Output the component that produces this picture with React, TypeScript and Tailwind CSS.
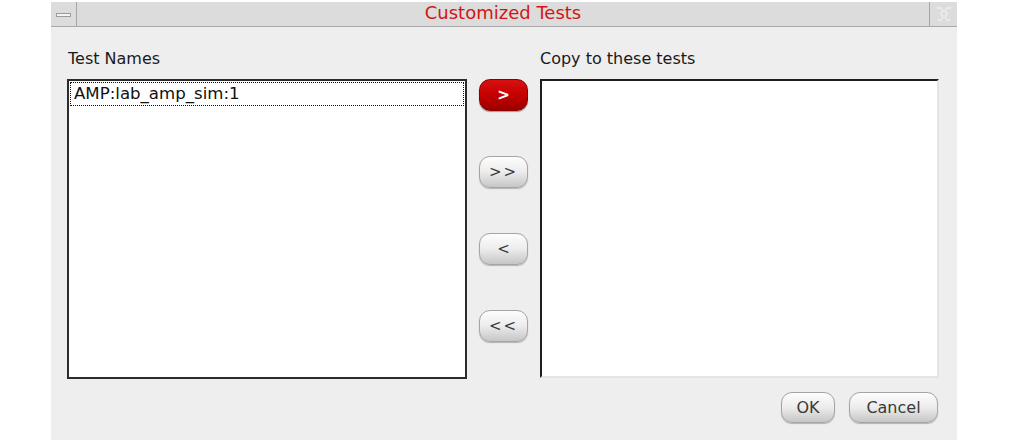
import React from 'react'

const font = { fontFamily: '"DejaVu Sans", "Liberation Sans", sans-serif' }

function PillButton({
  label,
  red = false,
  className = '',
}: {
  label: string
  red?: boolean
  className?: string
}) {
  return (
    <button
      className={
        'flex items-center justify-center rounded-[11px] border text-[15px] leading-none ' +
        (red
          ? 'border-[#8a0000] bg-gradient-to-b from-[#d81010] via-[#c40000] to-[#9c0000] text-white font-bold shadow-[0_1px_1px_rgba(0,0,0,0.35)] '
          : 'border-[#a5a5a5] bg-gradient-to-b from-[#fdfdfd] via-[#ececec] to-[#c6c6c6] text-[#3a3a3a] shadow-[0_1px_1px_rgba(0,0,0,0.25)] ') +
        className
      }
    >
      {label}
    </button>
  )
}

export default function App() {
  return (
    <div className="w-[1013px] h-[440px] bg-white overflow-hidden" style={font}>
      <div className="ml-[51px] w-[906px] h-full pt-[2px] bg-white">
        <div className="h-full bg-[#efeeee] flex flex-col">
          {/* title bar */}
          <div className="h-[25px] flex items-stretch bg-[#dcdcdc] border-b border-[#a9a9a9]">
            <div className="w-[26px] border-r border-[#a6a6a6] flex items-center justify-center">
              <div className="w-[15px] h-[4px] mt-[2px] bg-[#f4f4f4] border border-[#9a9a9a]" />
            </div>
            <div className="flex-1 flex items-center justify-center text-[18px] text-[#d31515] leading-none pb-[2px]">
              Customized Tests
            </div>
            <div className="w-[28px] border-l border-[#a6a6a6] flex items-center justify-center">
              <svg width="20" height="18" viewBox="0 0 20 18" fill="none" stroke="#f7f7f7" strokeWidth="1.5" strokeDasharray="1.5 1">
                <path d="M3 3h4l2 3-2 3 2 3-2 3H3M17 3h-4l-2 3 2 3-2 3 2 3h4" />
              </svg>
            </div>
          </div>

          {/* body */}
          <div className="flex pl-[16px] pt-[22px]">
            <div className="flex flex-col">
              <div className="text-[16px] leading-[19px] text-[#1a1a1a] pl-[1px]">Test Names</div>
              <div className="mt-[11px] w-[400px] h-[300px] bg-white border-2 border-[#2b2b2b] p-[1px]">
                <div className="h-[24px] border border-dotted border-[#111] flex items-center pl-[3px] text-[16.6px] text-[#111] leading-none">
                  AMP:lab_amp_sim:1
                </div>
              </div>
            </div>

            <div className="ml-[12px] mt-[30px] flex flex-col gap-[45px]">
              <PillButton label=">" red className="w-[49px] h-[32px]" />
              <PillButton label=">>" className="w-[49px] h-[32px] tracking-[2px]" />
              <PillButton label="<" className="w-[49px] h-[32px]" />
              <PillButton label="<<" className="w-[49px] h-[32px] tracking-[2px]" />
            </div>

            <div className="ml-[12px] flex flex-col">
              <div className="text-[16px] leading-[19px] text-[#1a1a1a]">Copy to these tests</div>
              <div className="mt-[11px] w-[399px] h-[299px] bg-white border-2 border-t-[#1e1e1e] border-l-[#1e1e1e] border-r-[#e4e4e4] border-b-[#e4e4e4]" />
            </div>
          </div>

          {/* footer */}
          <div className="flex justify-end gap-[14px] pr-[19px] mt-[13px]">
            <PillButton label="OK" className="w-[54px] h-[31px] text-[16px]" />
            <PillButton label="Cancel" className="w-[89px] h-[31px] text-[16px]" />
          </div>
        </div>
      </div>
    </div>
  )
}
